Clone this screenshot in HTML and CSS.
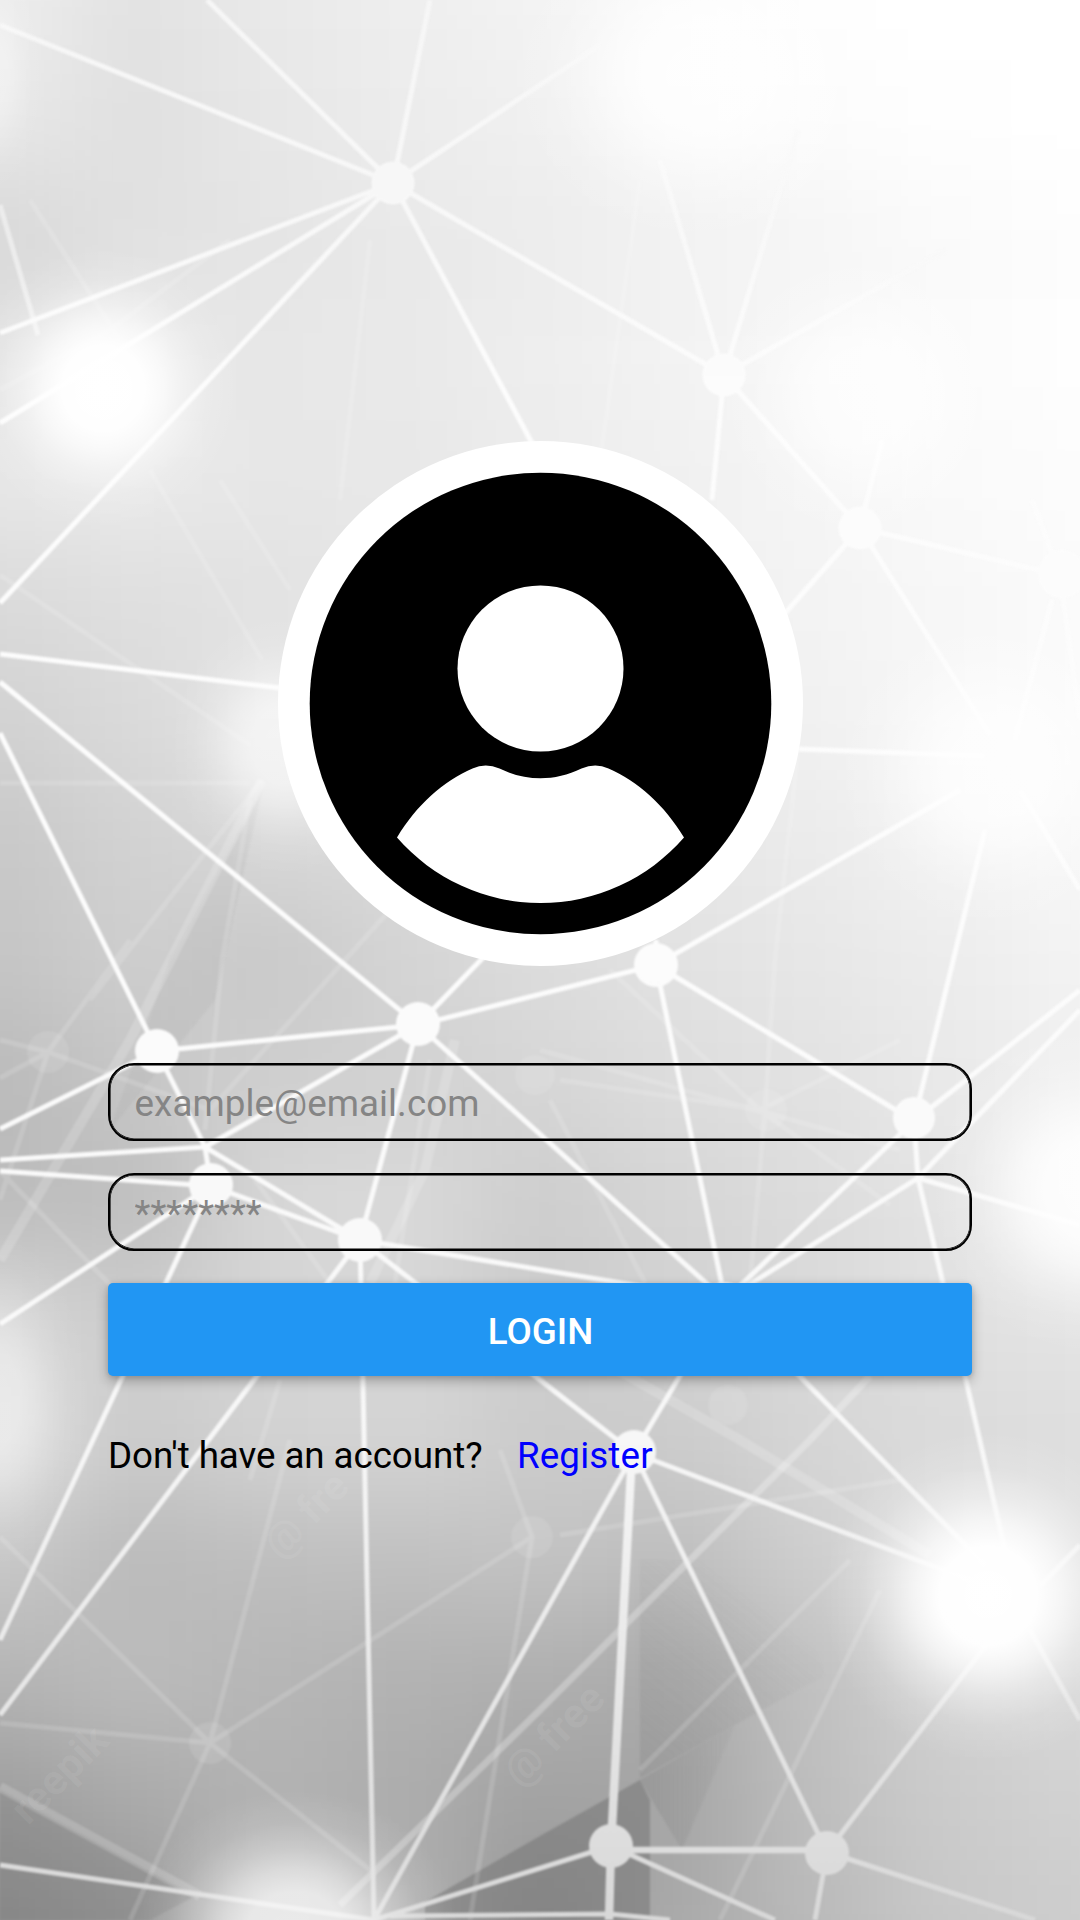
FILE: index.html
```html
<!DOCTYPE html>
<html lang="en">
<head>
<meta charset="utf-8">
<title>Login</title>
<link rel="stylesheet" href="styles.css">
</head>
<body>
<main class="screen">
  <svg class="backdrop" viewBox="0 0 1080 1920" aria-hidden="true">
    <defs>
      <filter id="soft" filterUnits="userSpaceOnUse" x="-300" y="-300" width="1680" height="2520" color-interpolation-filters="sRGB"><feGaussianBlur stdDeviation="48"/></filter>
      <filter id="edge" filterUnits="userSpaceOnUse" x="-20" y="-20" width="1120" height="1960" color-interpolation-filters="sRGB"><feGaussianBlur stdDeviation="0.8"/></filter>
      <radialGradient id="glow">
        <stop offset="0" stop-color="#fff"/><stop offset=".3" stop-color="#fff" stop-opacity=".97"/>
        <stop offset=".45" stop-color="#fff" stop-opacity=".72"/><stop offset=".6" stop-color="#fff" stop-opacity=".4"/><stop offset=".78" stop-color="#fff" stop-opacity=".13"/><stop offset="1" stop-color="#fff" stop-opacity="0"/>
      </radialGradient>
      <linearGradient id="shade" x1="780" y1="1620" x2="640" y2="1800" gradientUnits="userSpaceOnUse">
        <stop offset="0" stop-color="#777" stop-opacity="0"/><stop offset="1" stop-color="#777" stop-opacity=".24"/>
      </linearGradient>
      <linearGradient id="wedge" x1="640" y1="0" x2="760" y2="0" gradientUnits="userSpaceOnUse">
        <stop offset="0" stop-color="#777" stop-opacity=".26"/><stop offset="1" stop-color="#777" stop-opacity="0"/>
      </linearGradient>
      <linearGradient id="web" x1="0" y1="0" x2="0" y2="1920" gradientUnits="userSpaceOnUse">
        <stop offset="0" stop-color="#f6f6f6"/><stop offset=".12" stop-color="#f8f8f8"/><stop offset=".2" stop-color="#fcfcfc"/><stop offset=".5" stop-color="#fcfcfc"/><stop offset=".75" stop-color="#f7f7f7"/><stop offset="1" stop-color="#d8d8d8"/>
      </linearGradient>
    </defs>

    <g id="tones" filter="url(#soft)"></g>

    <g filter="url(#edge)">
      <path class="facet" d="M425 1902 540 1836 640 1780 650 1800V1920H425z"/>
      <path class="facet facet-mid" d="M0 1790 195 1896 150 1920H0z"/>
      <path d="M640 1560V1778L740 1722 825 1675 790 1560z" fill="url(#shade)"/>
      <path d="M640 1780 735 1725 682 1850z" fill="url(#wedge)"/>
      <path d="M262 790 215 1000 110 1130 170 960z" fill="#888" fill-opacity=".09"/>
    </g>

    <g class="faint" filter="url(#edge)">
      <path d="M0 1537 210 1743 290 1440M532 1537 210 1743 0 1723M210 1743 130 1920M210 1743 370 1870M500 1450 532 1537 470 1920"/>
      <path d="M150 470 262 660M220 480 290 590M0 575 250 745M0 783H250M262 780 90 1000M250 800 222 960 205 1130M390 910 210 1110 48 1052M48 1052 130 940M48 1052 0 1040M48 1052 0 1078M48 1052 0 1200M0 1171 125 1300M255 1180 330 1283"/>
      <path d="M798 750 775 960 765 1110 750 1283M540 1050 900 1150M560 1080 760 1110 900 1040M610 970 760 1110 890 1205M430 1060 395 1283M550 1100 645 1283M640 1770 850 1560M880 1590 720 1920M560 1535 900 1480M280 1380 250 1480"/>
      <path d="M0 390 110 330 230 240M30 200 120 340M370 240 340 500M640 180 600 460M940 250 1020 480M920 280 905 500M945 270 1030 580"/>
      <path class="faint-wide" d="M262 780 130 1040 0 1260M0 1787 200 1896M600 1360 740 1440 930 1555M455 1040 425 1170 370 1283"/>
      <path class="faint-bright" d="M340 1905 540 1710 810 1440 870 1376"/>
      <circle cx="48" cy="1052" r="21"/><circle cx="210" cy="1743" r="21"/><circle cx="532" cy="1537" r="21"/><circle cx="766" cy="1110" r="21"/><circle cx="728" cy="1405" r="20"/><circle cx="535" cy="1075" r="20"/>
    </g>

    <g class="marks"><text transform="translate(28 1826) rotate(-45)">reepik</text><text transform="translate(520 1788) rotate(-45)">@ free</text><text transform="translate(280 1560) rotate(-45)">@ fre</text></g>

    <g class="web" filter="url(#edge)">
      <path d="M0 25 393 183 207 0M430 0 393 183 600 45M0 333 393 183 0 423M0 603 393 183 533 445M393 183 724 375 660 160M724 375 798 130M724 375 945 250M724 375 712 500M724 375 860 528 1060 575M860 528 990 735M860 528 700 710M860 528 882 440"/>
      <path class="web-dim" d="M0 205 38 335"/>
      <path d="M0 654 280 688M0 682 418 1025M0 733 157 1051 418 1025 656 965 960 790M418 1025 500 940M418 1025 360 1240M418 1025 205 1147M418 1025 725 1300M0 1129 157 1051 205 1147 211 1186M0 1160 205 1147 360 1240M0 1171 211 1186 360 1240 725 1300M0 1324 211 1186 0 1640M360 1240 0 1715M360 1240 374 1920M360 1240 634 1453"/>
      <path d="M656 940V965L725 1300M656 965 914 1121 985 830M914 1121 725 1300M914 1121 1080 990M914 1121 918 1178 725 1300M918 1178 1080 1010M918 1178 1080 1225M918 1178 965 1376 1005 1550M798 749 985 756M1020 790 1080 890M1052 600 1015 740M1062 590 1080 720M1032 500 1055 560"/>
      <path d="M634 1453 725 1300 985 1565M374 1920 634 1453 970 1580M634 1453 827 1852 990 1640M1030 1630 1080 1720M1040 1586 1080 1545M0 1865 374 1920 611 1846 775 1920M827 1852 1035 1920M827 1852 815 1920M390 1916 610 1914 670 1920"/>
      <path class="web-mid" d="M611 1850H827"/>
      <path class="web-thick" d="M632 1453 611 1846 609 1920"/>
      <circle cx="393" cy="183" r="21.5"/><circle cx="724" cy="375" r="21.5"/><circle cx="860" cy="528" r="21.5"/><circle cx="656" cy="965" r="22"/><circle cx="418" cy="1024" r="22"/><circle cx="157" cy="1051" r="22"/><circle cx="211" cy="1185" r="22"/><circle cx="360" cy="1240" r="22"/><circle cx="914" cy="1118" r="21"/><circle cx="634" cy="1452" r="22"/><circle cx="611" cy="1846" r="22"/><circle cx="827" cy="1853" r="22"/><circle cx="1062" cy="574" r="24"/><circle cx="725" cy="1304" r="22"/>
    </g>

    <ellipse cx="103" cy="388" rx="135" ry="140" fill="url(#glow)"/>
    <ellipse cx="700" cy="75" rx="190" ry="170" fill="url(#glow)" opacity=".8"/>
    <circle cx="865" cy="395" r="150" fill="url(#glow)" opacity=".7"/>
    <ellipse cx="285" cy="745" rx="115" ry="130" fill="url(#glow)" opacity=".6"/>
    <circle cx="995" cy="770" r="160" fill="url(#glow)" opacity=".75"/>
    <ellipse cx="1095" cy="1190" rx="165" ry="165" fill="url(#glow)" opacity=".85"/>
    <circle cx="988" cy="1596" r="165" fill="url(#glow)"/>
    <ellipse cx="-10" cy="1400" rx="100" ry="170" fill="url(#glow)" opacity=".4"/>
    <ellipse cx="295" cy="1935" rx="165" ry="145" fill="url(#glow)" opacity=".7"/>
    <ellipse cx="-10" cy="75" rx="55" ry="120" fill="url(#glow)" opacity=".35"/>
  </svg>

  <form class="login">
    <svg class="avatar" viewBox="0 0 526 526" role="img" aria-label="User">
      <circle cx="263.500" cy="263.500" r="262.5" fill="#fff"/>
      <circle cx="263.500" cy="263.500" r="230.800" fill="#000"/>
      <circle cx="263.500" cy="228.500" r="83" fill="#fff"/>
      <path d="M120 397.500C139.500 365 166.500 341 195.500 328.500Q208.500 322.500 222.500 328.500C249.500 341.500 277.500 341.500 304.500 328.500Q318.500 322.500 331.500 328.500C360.500 341 387.500 365 407 397.500A190 190 0 0 1 120 397.500z" fill="#fff"/>
    </svg>
    <input class="field" type="text" placeholder="example@email.com" aria-label="Email">
    <input class="field" type="password" placeholder="********" aria-label="Password">
    <button class="submit" type="button">LOGIN</button>
    <p class="signup"><span class="question">Don't have an account?</span><a class="link">Register</a></p>
  </form>
</main>
<script src="backdrop.js"></script>
</body>
</html>
```
FILE: styles.css
```css
* { box-sizing: border-box; }
body { margin: 0; font-family: Roboto, "Liberation Sans", sans-serif; font-size: 36.75px; color: #000; }
.screen { display: grid; width: 1080px; height: 1920px; overflow: hidden; background: #ddd; }
.backdrop { grid-area: 1 / 1; width: 1080px; height: 1920px; }
.facet { fill: #6e6e6e; fill-opacity: .48; }
.facet-mid { fill-opacity: .25; }
.faint path { fill: none; stroke: #fff; stroke-opacity: .15; stroke-width: 5; }
.faint .faint-wide { stroke-width: 10; stroke-opacity: .18; }
.faint .faint-bright { stroke-width: 7; stroke-opacity: .28; }
.faint circle { fill: #fff; fill-opacity: .11; }
.marks { fill: #fff; fill-opacity: .07; font-size: 42px; font-weight: 700; }
.web path { fill: none; stroke: url(#web); stroke-width: 5; }
.web .web-dim { stroke-opacity: .6; }
.web .web-mid { stroke-width: 6.5; stroke: #ddd; }
.web .web-thick { stroke-width: 8.5; }
.web circle { fill: url(#web); }
.login { grid-area: 1 / 1; z-index: 1; display: flex; flex-direction: column; padding: 440px 108px 0; }
.avatar { width: 526px; height: 526px; align-self: center; margin-bottom: 97px; overflow: visible; }
.field { width: 100%; height: 78px; margin: 0 0 32px; padding: 2px 24px 0 24.5px; border: 2px solid #000; border-radius: 26px; background: transparent; box-shadow: inset 0 0 0 .6px #000; font: inherit; letter-spacing: .08px; color: #000; outline: 0; }
.field::placeholder { color: #858585; opacity: 1; }
.submit { height: 93px; padding: 4px 0 0 1px; border: 0; border-radius: 5px; background: #2196f3; box-shadow: 0 5px 12px rgba(0,0,0,.26), 0 1px 5px rgba(0,0,0,.12); color: #fff; font: 500 36.75px Roboto, "Liberation Sans", sans-serif; }
.signup { display: flex; gap: 34.5px; margin: 58px 0 0; line-height: 43px; }
.question { letter-spacing: -.07px; }
.link { letter-spacing: .15px; color: #00f; }
```
FILE: backdrop.js
```js
// Grey levels of the backdrop, sampled every 135px across and 120px down.
const tones = [
  [238,226,233,238,243,249,254,255,255],
  [232,224,231,236,240,247,252,254,255],
  [215,225,229,233,236,241,245,250,253],
  [228,233,231,233,238,243,247,251,254],
  [232,234,231,232,236,240,245,250,252],
  [218,223,226,230,235,240,243,247,251],
  [210,218,230,230,230,236,241,247,251],
  [200,210,216,218,225,230,235,243,248],
  [197,206,200,212,220,226,231,236,243],
  [186,198,207,209,214,221,226,233,240],
  [188,190,215,218,205,213,220,228,244],
  [214,205,212,214,203,210,216,224,228],
  [225,203,211,213,204,204,214,218,222],
  [200,186,190,192,195,190,206,224,224],
  [180,188,182,178,175,170,192,210,216],
  [158,170,178,172,162,165,190,203,210],
  [142,152,190,178,150,170,185,200,205]
];
const layer = document.getElementById('tones');
tones.forEach((row, r) => row.forEach((v, c) => {
  const cell = document.createElementNS('http://www.w3.org/2000/svg', 'rect');
  const left = c === 0 ? -300 : c * 135 - 68;
  const right = c === 8 ? 1380 : c * 135 + 68;
  const top = r === 0 ? -300 : r * 120 - 60;
  const bottom = r === 16 ? 2220 : r * 120 + 61;
  cell.setAttribute('x', left);
  cell.setAttribute('y', top);
  cell.setAttribute('width', right - left);
  cell.setAttribute('height', bottom - top);
  cell.setAttribute('fill', `rgb(${v},${v},${v})`);
  layer.appendChild(cell);
}));
```
